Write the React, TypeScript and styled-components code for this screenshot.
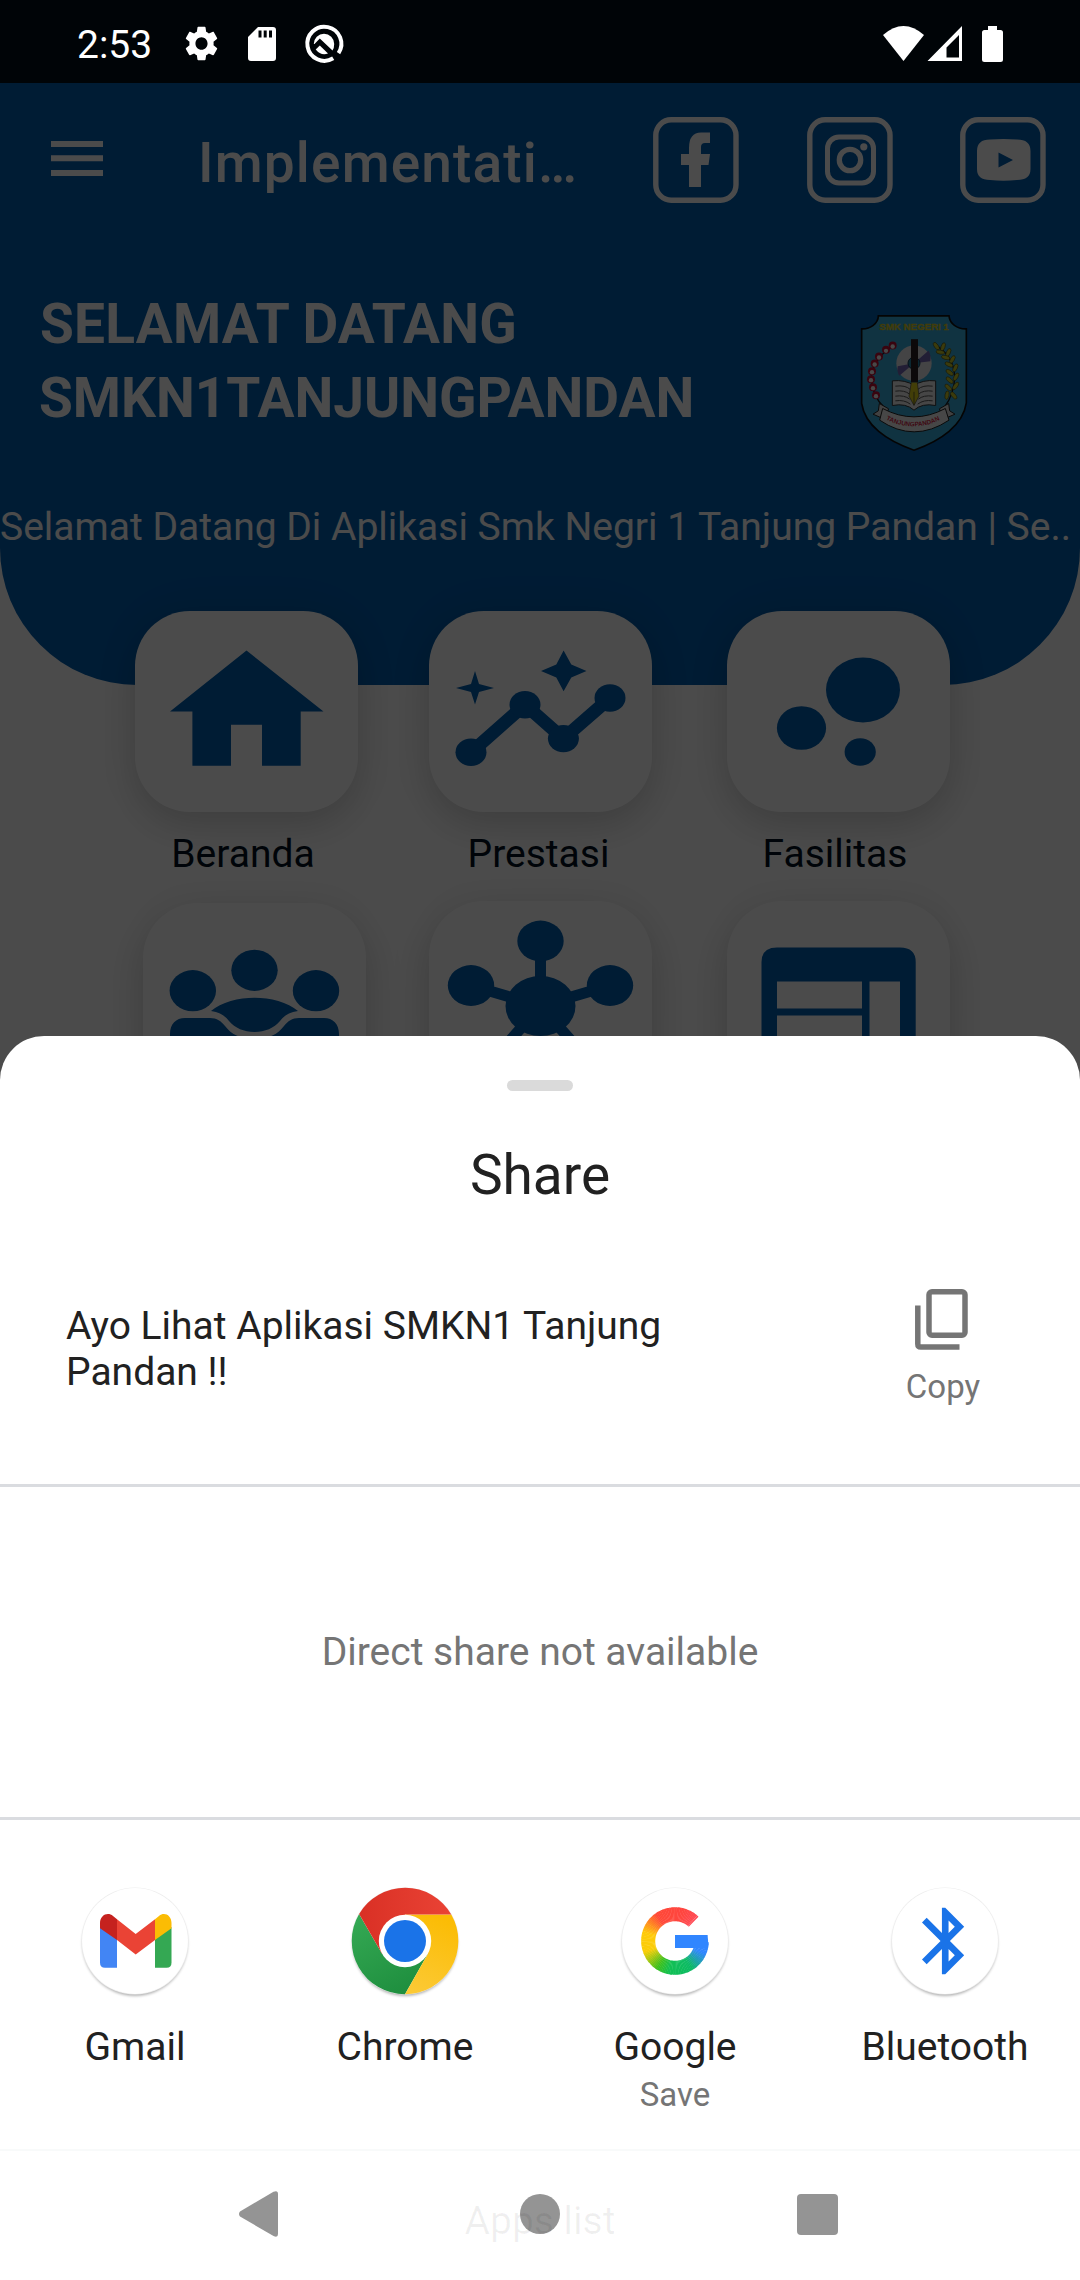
import React from "react";
import styled, { createGlobalStyle } from "styled-components";

const NAVY = "#005fb1";

const GlobalStyle = createGlobalStyle`
  body { margin: 0; background: #fff; font-family: Roboto, "Noto Sans", sans-serif; }
  svg { display: block; flex: none; overflow: visible; }
`;

const Screen = styled.div`
  position: relative;
  display: flex;
  flex-direction: column;
  width: 1080px;
  height: 2280px;
  overflow: hidden;
  background: #fff;
`;

const StatusBar = styled.div`
  position: relative;
  z-index: 2;
  display: flex;
  align-items: center;
  box-sizing: border-box;
  height: 83px;
  padding: 4px 77px 0;
  background: #000407;
`;

const Clock = styled.span`
  width: 108px;
  padding-top: 3px;
  font-size: 39px;
  line-height: 46px;
  color: #fff;
`;

const StatusLeft = styled.div`
  display: flex;
  align-items: center;
  gap: 30px;
  flex: 1;
`;

const StatusRight = styled.div`
  display: flex;
  align-items: center;
`;

const Hero = styled.header`
  box-sizing: border-box;
  flex: none;
  height: 602px;
  background: ${NAVY};
  border-radius: 0 0 137px 137px;
  color: #fff;
`;

const Toolbar = styled.div`
  display: flex;
  align-items: center;
  height: 154px;
  padding-left: 51px;
`;

const AppTitle = styled.h1`
  width: 455px;
  margin: 6px 0 0 95px;
  font-size: 55px;
  font-weight: 500;
  line-height: 64px;
  letter-spacing: 1.15px;
  white-space: nowrap;
`;

const Socials = styled.div`
  display: flex;
  gap: 67.5px;
`;

const Welcome = styled.div`
  display: flex;
  justify-content: space-between;
  height: 198px;
  padding: 50px 113px 0 39px;
`;

const WelcomeText = styled.div`
  font-size: 55px;
  font-weight: 700;
  line-height: 74px;
`;

const Greeting = styled.div`
  padding-left: 1px;
  letter-spacing: 0.22px;
`;

const Crest = styled.div`
  padding-top: 28px;
`;

const Marquee = styled.div`
  margin-top: 19px;
  font-size: 39px;
  line-height: 46px;
  white-space: nowrap;
`;

const Menu = styled.main`
  display: flex;
  flex-direction: column;
  gap: 24px;
  margin-top: -74px;
  padding-left: 135px;
`;

const MenuRow = styled.div`
  display: grid;
  grid-template-columns: 294px 298px 223px;
`;

const MenuItem = styled.div<{ $dx?: number; $dy?: number }>`
  width: 223px;
  margin-left: ${(p) => p.$dx ?? 0}px;
  margin-top: ${(p) => p.$dy ?? 0}px;
`;

const Card = styled.div`
  height: 201px;
  border-radius: 55px;
  background: #fff;
  box-shadow: 0 14px 38px rgba(0, 0, 0, 0.15), 0 0 50px rgba(0, 0, 0, 0.05);
`;

const CardLabel = styled.div<{ $shift?: number }>`
  margin-top: 19px;
  padding-right: ${(p) => p.$shift ?? 7}px;
  font-size: 39px;
  line-height: 46px;
  text-align: center;
  color: #001020;
`;

const Scrim = styled.div`
  position: absolute;
  inset: 83px 0 0;
  background: rgba(0, 0, 0, 0.706);
`;

const Sheet = styled.section`
  position: absolute;
  inset: 1036px 0 0;
  display: flex;
  flex-direction: column;
  box-sizing: border-box;
  padding-top: 44px;
  border-radius: 44px 44px 0 0;
  background: #fff;
  color: #212121;
`;

const Handle = styled.div`
  flex: none;
  width: 66px;
  height: 11px;
  margin: 0 auto;
  border-radius: 5.5px;
  background: #dadada;
`;

const SheetTitle = styled.h2`
  margin: 52px 0 0;
  font-size: 55px;
  font-weight: 400;
  line-height: 64px;
  text-align: center;
`;

const Preview = styled.div`
  display: flex;
  justify-content: space-between;
  box-sizing: border-box;
  height: 277px;
  padding: 82px 65px 0 66px;
`;

const Message = styled.p`
  width: 640px;
  margin: 14px 0 0;
  font-size: 39px;
  line-height: 46px;
`;

const CopyButton = styled.div`
  display: flex;
  flex-direction: column;
  align-items: center;
  gap: 17px;
  width: 144px;
  font-size: 33px;
  line-height: 40px;
  color: #757575;
  svg { margin-right: 4px; }
`;

const Divider = styled.div`
  flex: none;
  height: 3px;
  background: #dadce0;
`;

const DirectShare = styled.div`
  display: flex;
  flex: none;
  align-items: center;
  justify-content: center;
  height: 330px;
  font-size: 39px;
  color: #757575;
`;

const Apps = styled.div`
  display: grid;
  grid-template-columns: repeat(4, 270px);
  box-sizing: border-box;
  height: 329px;
  padding-top: 61px;
`;

const AppItem = styled.div`
  display: flex;
  flex-direction: column;
  align-items: center;
`;

const AppName = styled.div`
  margin-top: 23px;
  font-size: 39px;
  line-height: 46px;
`;

const AppNote = styled.div`
  margin-top: 5px;
  font-size: 33px;
  line-height: 40px;
  color: #757575;
`;

const NavBar = styled.nav`
  position: relative;
  display: flex;
  align-items: center;
  justify-content: space-between;
  box-sizing: border-box;
  height: 131px;
  padding: 0 242px 3px 239px;
  border-top: 2px solid #f8fafa;
`;

const HomeButton = styled.div`
  padding-left: 5px;
`;

const AppsListLabel = styled.div`
  position: absolute;
  inset: 47px 0 auto;
  font-size: 39px;
  line-height: 46px;
  text-align: center;
  color: rgba(0, 0, 0, 0.06);
`;

function SocialFrame({ children }: { children: React.ReactNode }) {
  return (
    <svg width="86" height="86" viewBox="0 0 86 86" fill="#fff">
      <rect x="2.8" y="2.8" width="80.2" height="80.4" rx="15.5" fill="none" stroke="#fff" strokeWidth="5.4" />
      {children}
    </svg>
  );
}

const berries: [number, number][] = [
  [217, 166], [197, 179], [176, 199], [163, 220], [155, 243], [152, 267], [158, 291], [167, 315],
];
const leaves: [number, number, number][] = [
  [348, 168, 55], [368, 170, 110], [360, 186, 10], [384, 187, 115], [376, 202, 15], [396, 208, 120], [386, 223, 25],
  [405, 233, 115], [388, 247, 35], [407, 260, 120], [388, 270, 40], [406, 287, 125], [384, 292, 45], [400, 316, 50], [380, 315, 100],
];

function SchoolCrest() {
  return (
    <svg width="106" height="136" viewBox="122 75 318 407">
      <path
        d="M174 77H386C388 100 410 117 438 116V338C428 405 362 452 281 480C198 452 134 405 124 340V116C150 117 174 100 174 77Z"
        fill="#38aede" stroke="#101010" strokeWidth="5"
      />
      <text x="177" y="120" textLength="208" lengthAdjust="spacingAndGlyphs" fontFamily="Liberation Sans, sans-serif" fontWeight="700" fontSize="26" fill="#dccb22" stroke="#dccb22" strokeWidth="1">
        SMK NEGERI 1
      </text>
      <path d="M217 166Q150 215 153 270Q158 320 190 350M346 165Q402 200 403 262Q402 310 372 352" fill="none" stroke="#1a1a1a" strokeWidth="4" />
      {berries.map(([x, y]) => (
        <g key={y}>
          <circle cx={x} cy={y} r="12" fill="#c01035" />
          <circle cx={x} cy={y + 3} r="6.5" fill="#f5f5f5" />
        </g>
      ))}
      {leaves.map(([x, y, a]) => (
        <ellipse key={`${x}-${y}`} cx={x} cy={y} rx="13" ry="6" transform={`rotate(${a} ${x} ${y})`} fill="#c8c82a" stroke="#33330a" strokeWidth="1.5" />
      ))}
      <circle cx="281" cy="219" r="53" fill="#e6e6ea" />
      <path d="M281 219L325 181Q333 196 330 213ZM281 219L237 257Q229 244 232 228Z" fill="#7567b5" />
      <circle cx="281" cy="219" r="18" fill="#2684a8" stroke="#153a55" strokeWidth="3" />
      <path d="M216 272Q255 268 281 286Q307 268 346 272V346Q305 338 281 360Q257 338 216 346Z" fill="#efefef" stroke="#333" strokeWidth="3" />
      <path d="M225 288Q255 284 270 298M225 303Q252 299 268 312M225 318Q252 314 268 327M225 332Q252 328 270 342M337 288Q307 284 292 298M337 303Q310 299 294 312M337 318Q310 314 294 327M337 332Q310 328 292 342" fill="none" stroke="#555" strokeWidth="3" />
      <path d="M272 147H293V276H272Z" fill="#2a2024" />
      <path d="M273 276H291L296 318L281 346L266 318Z" fill="#e0d21e" stroke="#444" strokeWidth="2" />
      <path d="M281 305V344" stroke="#333" strokeWidth="2" />
      <path d="M177 340L205 356L190 386L158 372L174 362ZM385 340L357 356L372 386L404 372L388 362Z" fill="#ddd" stroke="#222" strokeWidth="3" />
      <path d="M187 355Q281 405 375 355L386 390Q281 460 178 390Z" fill="#f2f2f2" stroke="#222" strokeWidth="3" />
      <path id="ribbon" d="M197 388Q281 430 366 386" fill="none" />
      <text fontFamily="Liberation Sans, sans-serif" fontWeight="700" fontSize="19" fill="#d31f45" textLength="168" lengthAdjust="spacingAndGlyphs">
        <textPath href="#ribbon">TANJUNGPANDAN</textPath>
      </text>
    </svg>
  );
}

function CardIcon({ children }: { children: React.ReactNode }) {
  return (
    <svg width="223" height="201" viewBox="0 0 223 201" fill={NAVY}>
      {children}
    </svg>
  );
}

function HomeIcon() {
  return (
    <CardIcon>
      <path d="M111.5 39.5L188.5 100.5H165.7V154.7H127V113.7H96V154.7H57.4V100.5H35Z" />
    </CardIcon>
  );
}

function InsightsIcon() {
  return (
    <CardIcon>
      <path d="M42 141.3L96 93.7L134.4 127.6L181 87" fill="none" stroke={NAVY} strokeWidth="13" />
      <ellipse cx="42" cy="141.3" rx="15.5" ry="13.7" />
      <ellipse cx="96" cy="93.7" rx="15.5" ry="13.7" />
      <ellipse cx="134.4" cy="127.6" rx="15.5" ry="13.7" />
      <ellipse cx="181" cy="87" rx="15.5" ry="13.7" />
      <path d="M46 60L50 73L65 77L50 81L46 93.5L42 81L27 77L42 73Z" />
      <path d="M134.6 39.5L142.3 53.6L157.5 60L142.3 66.4L134.6 80.3L127.3 66.4L112 60L127.3 53.6Z" />
    </CardIcon>
  );
}

function BubblesIcon() {
  return (
    <CardIcon>
      <ellipse cx="136" cy="79" rx="37" ry="32.6" />
      <ellipse cx="74.5" cy="117" rx="24.6" ry="21.8" />
      <ellipse cx="133.2" cy="141" rx="15.6" ry="13.8" />
    </CardIcon>
  );
}

function GroupsIcon() {
  return (
    <CardIcon>
      <ellipse cx="111.5" cy="67.3" rx="23.2" ry="20.6" />
      <ellipse cx="49.8" cy="87.7" rx="23.2" ry="20.6" />
      <ellipse cx="173" cy="87.7" rx="23.2" ry="20.6" />
      <path d="M68 108C78 99 96 94.7 111.5 94.7S145 99 155 108C146 109 141 113 137 118C131 125 122 129 111.5 129S92 125 86 118C82 113 77 109 68 108Z" />
      <path d="M27 160V131C27 121 33 115 42 115H67C74 115 78 118 82 123C88 131 97 136 111.5 136S135 131 141 123C145 118 149 115 156 115H181C190 115 196 121 196 131V160Z" />
    </CardIcon>
  );
}

function HubIcon() {
  return (
    <CardIcon>
      <path d="M111.5 40V105M42 84.5L111.5 105L181 84.5M62 161L111.5 105L161 161" fill="none" stroke={NAVY} strokeWidth="11" />
      <ellipse cx="111.5" cy="105" rx="35" ry="30" />
      <ellipse cx="111.5" cy="40" rx="23.2" ry="20.4" />
      <ellipse cx="42" cy="84.5" rx="23.2" ry="20.4" />
      <ellipse cx="181" cy="84.5" rx="23.2" ry="20.4" />
    </CardIcon>
  );
}

function PageIcon() {
  return (
    <CardIcon>
      <path fillRule="evenodd" d="M50 46.5H173Q188.7 46.5 188.7 61V165H34.5V61Q34.5 46.5 50 46.5ZM50 80.5V107.5H135V80.5ZM50 114.5V150H135V114.5ZM142.5 80.5V150H173V80.5Z" />
    </CardIcon>
  );
}

function AppDisc({ children }: { children?: React.ReactNode }) {
  return (
    <svg width="120" height="120" viewBox="-60 -60 120 120">
      <defs>
        <filter id="disc" x="-20%" y="-20%" width="140%" height="140%">
          <feGaussianBlur stdDeviation="1.5" />
        </filter>
      </defs>
      <circle cy="2.3" r="52.4" fill="#000" opacity=".34" filter="url(#disc)" />
      <circle r="53.6" fill="#ededed" />
      <circle r="52.9" fill="#fff" />
      {children}
    </svg>
  );
}

function GmailIcon() {
  return (
    <AppDisc>
      <path d="M-35-14L-18-3V26.7H-30Q-35 26.7-35 21.7Z" fill="#4285f4" />
      <path d="M36.5-14L20-3V26.7H31.5Q36.5 26.7 36.5 21.7Z" fill="#34a853" />
      <path d="M-18-21.7L.7-7L20-21.7V-1L.7 13.4L-18-1Z" fill="#ea4335" />
      <path d="M-35-12.7V-18C-35-26-27-29.5-22-25L-18-21.7V-1Z" fill="#c5221f" />
      <path d="M36.5-12.7V-18C36.5-26 29-29.5 24-25L20-21.7V-1Z" fill="#fbbc04" />
    </AppDisc>
  );
}

function ChromeIcon() {
  return (
    <AppDisc>
      <defs>
        <linearGradient id="cr"><stop stopColor="#d93025" /><stop offset="1" stopColor="#ea4335" /></linearGradient>
        <linearGradient id="cg" x1=".2" y1="0" x2=".7" y2="1"><stop stopColor="#34a853" /><stop offset="1" stopColor="#1e8e3e" /></linearGradient>
        <linearGradient id="cy" x1=".6" y1="0" x2=".3" y2="1"><stop stopColor="#fbbc04" /><stop offset="1" stopColor="#fcc934" /></linearGradient>
      </defs>
      <path d="M-45.9-27A53.3 53.3 0 0 0 0 53.3L22.8 13L0 0L-22.8 13Z" fill="url(#cg)" />
      <path d="M46.3-26.5A53.3 53.3 0 0 1 0 53.3L22.8 13L0-26.5Z" fill="url(#cy)" />
      <path d="M-45.9-27A53.3 53.3 0 0 1 46.3-26.5H0V0L-22.8 13Z" fill="url(#cr)" />
      <circle r="26.2" fill="#fff" />
      <circle r="21" fill="#1a73e8" />
    </AppDisc>
  );
}

const ringStops: [number, number[]][] = [
  [0, [49, 134, 255]], [22, [49, 134, 255]], [58, [12, 186, 100]], [100, [18, 192, 84]], [122, [60, 192, 30]],
  [160, [250, 205, 8]], [195, [255, 202, 10]], [235, [255, 72, 56]], [285, [255, 70, 64]], [316, [255, 76, 88]],
];

function ringColor(angle: number) {
  const i = Math.max(1, ringStops.findIndex(([a]) => a >= angle));
  const [a0, c0] = ringStops[i - 1];
  const [a1, c1] = ringStops[i];
  const t = (angle - a0) / (a1 - a0);
  return `rgb(${c0.map((c, k) => Math.round(c + (c1[k] - c) * t)).join(",")})`;
}

function GoogleIcon() {
  const step = 3;
  const point = (deg: number) => {
    const r = (deg * Math.PI) / 180;
    return `${(Math.cos(r) * 26.8).toFixed(2)} ${(Math.sin(r) * 26.8).toFixed(2)}`;
  };
  const angles = Array.from({ length: 104 }, (_, i) => 2 + i * step).filter((a) => a + step <= 315);
  return (
    <AppDisc>
      {angles.map((a) => (
        <path key={a} d={`M${point(a)}A26.8 26.8 0 0 1 ${point(a + step + (a < 308 ? 0.8 : 0))}`} fill="none" stroke={ringColor(a + 1)} strokeWidth="14" />
      ))}
      <path d="M0-6H32.6Q33.4 0 33 7H0Z" fill="#3186ff" />
    </AppDisc>
  );
}

function BluetoothIcon() {
  return (
    <AppDisc>
      <path
        transform="translate(-39.6 -39.8) scale(3.32)"
        fill="#1a73e8"
        d="M17.71 7.71L12 2h-1v7.59L6.41 5 5 6.41 10.59 12 5 17.59 6.41 19 11 14.41V22h1l5.71-5.71-4.3-4.29 4.3-4.29zM13 5.83l1.88 1.88L13 9.59V5.83zm1.88 10.46L13 18.17v-3.76l1.88 1.88z"
      />
    </AppDisc>
  );
}

const firstRow = [
  { label: "Beranda", icon: <HomeIcon />, shift: 7 },
  { label: "Prestasi", icon: <InsightsIcon />, shift: 4 },
  { label: "Fasilitas", icon: <BubblesIcon />, shift: 7 },
];

const shareApps = [
  { name: "Gmail", icon: <GmailIcon /> },
  { name: "Chrome", icon: <ChromeIcon /> },
  { name: "Google", note: "Save", icon: <GoogleIcon /> },
  { name: "Bluetooth", icon: <BluetoothIcon /> },
];

export default function App() {
  return (
    <Screen>
      <GlobalStyle />
      <StatusBar>
        <Clock>2:53</Clock>
        <StatusLeft>
          <svg width="33" height="35" viewBox="2.2 2 19.6 20" preserveAspectRatio="none" fill="#fff">
            <path d="M19.14 12.94c.04-.3.06-.61.06-.94 0-.32-.02-.64-.07-.94l2.03-1.58c.18-.14.23-.41.12-.61l-1.92-3.32c-.12-.22-.37-.29-.59-.22l-2.39.96c-.5-.38-1.03-.7-1.62-.94L14.4 2.81c-.04-.24-.24-.41-.48-.41h-3.84c-.24 0-.43.17-.47.41l-.36 2.54c-.59.24-1.13.57-1.62.94l-2.39-.96c-.22-.08-.47 0-.59.22L2.74 8.87c-.12.21-.08.47.12.61l2.03 1.58c-.05.3-.09.63-.09.94s.02.64.07.94l-2.03 1.58c-.18.14-.23.41-.12.61l1.92 3.32c.12.22.37.29.59.22l2.39-.96c.5.38 1.03.7 1.62.94l.36 2.54c.05.24.24.41.48.41h3.84c.24 0 .44-.17.47-.41l.36-2.54c.59-.24 1.13-.56 1.62-.94l2.39.96c.22.08.47 0 .59-.22l1.92-3.32c.12-.22.07-.47-.12-.61l-2.01-1.58zM12 15.6c-1.98 0-3.6-1.62-3.6-3.6s1.62-3.6 3.6-3.6 3.6 1.62 3.6 3.6-1.62 3.6-3.6 3.6z" />
          </svg>
          <svg width="28" height="34" viewBox="0 0 28 34">
            <path fill="#fff" fillRule="evenodd" d="M10 0H25Q28 0 28 3V31Q28 34 25 34H3Q0 34 0 31V10ZM10.500 3.500V10.500H13.500V3.500ZM15.700 3.500V10.500H18.700V3.500ZM21 3.500V10.500H24V3.500Z" />
          </svg>
          <svg width="36" height="38" viewBox="1 0 36 38" fill="none">
            <path d="M33.500 28.200A17 17 0 1 0 28.200 33.300" stroke="#fff" strokeWidth="4" />
            <path d="M8.800 19A10.200 10.200 0 0 1 29.200 19Q29.200 23.500 27.500 25.500L14.800 13.500L9.500 19Z" fill="#fff" />
            <path d="M10.700 24.500L14.800 20.500L23 28.500Q16 31 10.700 24.500Z" fill="#fff" />
            <path d="M27 27L32.500 32.500" stroke="#000407" strokeWidth="2.500" />
          </svg>
        </StatusLeft>
        <StatusRight>
          <svg width="41" height="35" viewBox="0 0 41 35">
            <path fill="#fff" d="M0 9Q20.500-9 41 9L20.500 35Z" />
          </svg>
          <svg width="35" height="35" viewBox="0 0 35 35">
            <path fill="#fff" fillRule="evenodd" d="M38 0V35H3.500ZM35 9L22.500 21.500V31.500H35Z" />
          </svg>
          <svg width="44" height="36" viewBox="0 0 44 36">
            <path fill="#fff" d="M29 0H38V4H41.500Q44 4 44 6.500V33.500Q44 36 41.500 36H25.500Q23 36 23 33.500V6.500Q23 4 25.500 4H29Z" />
          </svg>
        </StatusRight>
      </StatusBar>

      <Hero>
        <Toolbar>
          <svg width="52" height="38" viewBox="0 0 52 38" fill="#fff">
            <path d="M0 0H52V6H0ZM0 14.300H52V20.300H0ZM0 29H52V35H0Z" />
          </svg>
          <AppTitle>Implementati…</AppTitle>
          <Socials>
            <SocialFrame>
              <path d="M36 70V48H28V37H36V31Q36 15.500 48 15.500H57V26H52Q48 26 48 30V37H57L55.500 48H48V70Z" />
            </SocialFrame>
            <SocialFrame>
              <rect x="20.500" y="20" width="46" height="46" rx="11.500" fill="none" stroke="#fff" strokeWidth="5" />
              <circle cx="43" cy="43" r="10.700" fill="none" stroke="#fff" strokeWidth="5.300" />
              <circle cx="56.800" cy="29.800" r="3.600" />
            </SocialFrame>
            <SocialFrame>
              <path fillRule="evenodd" d="M30 22.500Q43.500 21.300 57 22.500Q70.500 22.500 70.500 34V52Q70.500 63 57 63Q43.500 64.500 30 63Q17 63 17 52V34Q17 22.500 30 22.500ZM38.500 35.500V50.500L53 43Z" />
            </SocialFrame>
          </Socials>
        </Toolbar>
        <Welcome>
          <WelcomeText>
            <Greeting>SELAMAT DATANG</Greeting>
            SMKN1TANJUNGPANDAN
          </WelcomeText>
          <Crest>
            <SchoolCrest />
          </Crest>
        </Welcome>
        <Marquee>Selamat Datang Di Aplikasi Smk Negri 1 Tanjung Pandan | Se..</Marquee>
      </Hero>

      <Menu>
        <MenuRow>
          {firstRow.map((item) => (
            <MenuItem key={item.label}>
              <Card>{item.icon}</Card>
              <CardLabel $shift={item.shift}>{item.label}</CardLabel>
            </MenuItem>
          ))}
        </MenuRow>
        <MenuRow>
          <MenuItem $dx={8} $dy={2}>
            <Card><GroupsIcon /></Card>
          </MenuItem>
          <MenuItem>
            <Card><HubIcon /></Card>
          </MenuItem>
          <MenuItem>
            <Card><PageIcon /></Card>
          </MenuItem>
        </MenuRow>
      </Menu>

      <Scrim />

      <Sheet>
        <Handle />
        <SheetTitle>Share</SheetTitle>
        <Preview>
          <Message>Ayo Lihat Aplikasi SMKN1 Tanjung Pandan !!</Message>
          <CopyButton>
            <svg width="53" height="61" viewBox="0 0 53 61" fill="none" stroke="#757575" strokeWidth="5.500">
              <rect x="14" y="2.800" width="36" height="43.500" rx="3" />
              <path d="M2.800 16.500V55Q2.800 58 5.800 58H44.500" />
            </svg>
            Copy
          </CopyButton>
        </Preview>
        <Divider />
        <DirectShare>Direct share not available</DirectShare>
        <Divider />
        <Apps>
          {shareApps.map((app) => (
            <AppItem key={app.name}>
              {app.icon}
              <AppName>{app.name}</AppName>
              {app.note && <AppNote>{app.note}</AppNote>}
            </AppItem>
          ))}
        </Apps>
        <NavBar>
          <svg width="39" height="46" viewBox="0 0 39 46">
            <path fill="#949494" d="M1 20.500L34.500.8Q39-1 39 3V43Q39 47 34.500 45L1 25.500Q-1 23 1 20.500Z" />
          </svg>
          <HomeButton>
            <svg width="40" height="40" viewBox="0 0 40 40">
              <circle cx="20" cy="20" r="20" fill="#949494" />
            </svg>
          </HomeButton>
          <svg width="41" height="41" viewBox="0 0 41 41">
            <rect width="41" height="41" rx="4" fill="#949494" />
          </svg>
          <AppsListLabel>Apps list</AppsListLabel>
        </NavBar>
      </Sheet>
    </Screen>
  );
}
